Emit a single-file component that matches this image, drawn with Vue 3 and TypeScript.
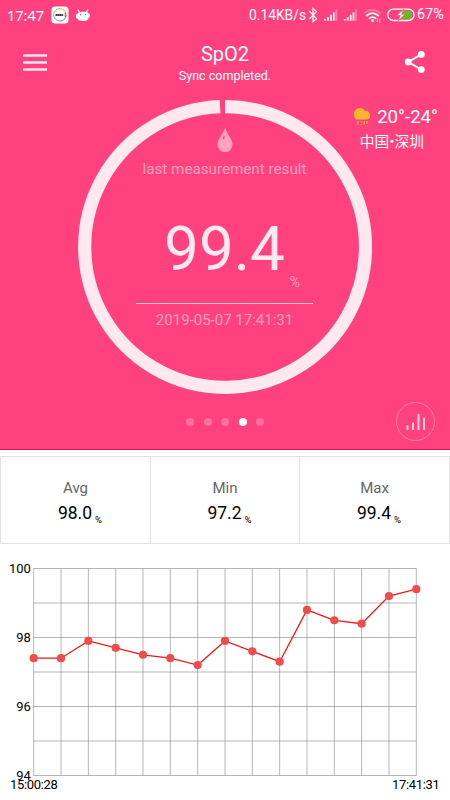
<script setup lang="ts">
interface Stat {
  label: string
  value: string
}

const stats: Stat[] = [
  { label: 'Avg', value: '98.0' },
  { label: 'Min', value: '97.2' },
  { label: 'Max', value: '99.4' },
]

const pages = 5
const activePage = 4

const left = 33.7
const right = 416.3
const top = 18.5
const unit = 34.5
const readings: number[] = [
  97.4, 97.4, 97.9, 97.7, 97.5, 97.4, 97.2, 97.9, 97.6, 97.3, 98.8, 98.5, 98.4, 99.2, 99.4,
]
const step = (right - left) / (readings.length - 1)
const points = readings.map((v, i) => ({ x: left + i * step, y: top + (100 - v) * unit }))
const polyline = points.map((p) => `${p.x.toFixed(1)},${p.y.toFixed(1)}`).join(' ')
const rows = [0, 1, 2, 3, 4, 5, 6].map((i) => top + i * unit)
const yLabels = [100, 98, 96, 94].map((v) => ({ text: v, y: top + (100 - v) * unit + 4.6 }))
</script>

<template>
  <main class="screen">
    <section class="hero">
      <div class="status">
        <span class="clock">17:47</span>
        <svg class="app-badge" width="18" height="18" viewBox="0 0 18 18">
          <rect x="0.5" y="0.5" width="17" height="17" rx="3.5" fill="#fff" />
          <g fill="none" stroke-width="1">
            <path d="M9 2.5A6.3 6.3 0 0 1 15.3 8.8" stroke="#efb04e" />
            <path d="M15.3 8.8A6.3 6.3 0 0 1 9 15.1" stroke="#9a62e0" />
            <path d="M9 15.1A6.3 6.3 0 0 1 2.7 8.8" stroke="#4aa5ee" />
            <path d="M2.7 8.8A6.3 6.3 0 0 1 9 2.5" stroke="#8fce62" />
          </g>
          <path d="M4.6 9h7.8" stroke="#333" stroke-width="2" stroke-dasharray="1.6 .3" />
          <path d="M14.2 6.2v5" stroke="#555" stroke-width="0.8" />
        </svg>
        <svg class="robot" width="16" height="13" viewBox="0 0 16 13">
          <path d="M3 1l2 3M12.8 1l-2 3" stroke="#fff" stroke-width="1.3" stroke-linecap="round" />
          <path
            d="M2.6 4.6C4 2.4 11.8 2.2 13.4 4.2C15.4 4.4 15.8 8 13.6 8.8C13 11.8 10.8 11.9 8.2 11.9C5.2 11.9 3 11.6 2.3 9.6C.2 9 .3 5.4 2.6 4.6Z"
            fill="#fff"
          />
          <circle cx="5.4" cy="5.8" r="0.7" fill="#ff427f" />
          <circle cx="10.5" cy="5.4" r="0.7" fill="#ff427f" />
        </svg>
        <div class="spacer"></div>
        <span class="speed">0.14KB/s</span>
        <svg class="sys" width="80" height="20" viewBox="306 5 80 20">
          <path d="M309.3 11l7.2 7.6-3.5 3V8.6l3.5 3-7.2 7.4" fill="none" stroke="#fff" stroke-width="1.2" />
          <g stroke-width="1.8">
            <path d="M325 20.8v-1.8M328 20.8v-3.6M331 20.8v-6M333.8 20.8v-8.6" stroke="#fff" opacity="0.95" />
            <path d="M336.3 20.8V9.3" stroke="#fff" opacity="0.3" />
            <path d="M344.7 20.8v-1.8M347.7 20.8v-3.6M350.7 20.8v-6M353.5 20.8v-8.6" stroke="#fff" opacity="0.95" />
            <path d="M356 20.8V9.3" stroke="#fff" opacity="0.3" />
          </g>
          <g fill="none" stroke="#fff" stroke-width="1.7">
            <path d="M364.3 13.2q8.3-6.6 16.4 0" opacity="0.3" />
            <path d="M366.2 16q6.2-5.6 12.6 0" />
            <path d="M369 18.6q3.6-2.8 7 0" />
          </g>
          <circle cx="372.6" cy="20.7" r="1.4" fill="#fff" />
          <path d="M377.4 18v4M379.8 18.8v4" stroke="#fff" stroke-width="1" opacity="0.8" />
        </svg>
        <svg class="battery" width="28" height="14" viewBox="0 0 28 14">
          <rect x="0.7" y="1.1" width="26.4" height="11.4" rx="5.7" fill="none" stroke="#fff" stroke-width="1.3" />
          <path d="M12 2.8h9a4.1 4.1 0 0 1 0 8.2h-9z" fill="#5cc31d" />
          <path
            d="M16.8 1.2L9.6 7.5h3.7l-2.2 5.3 7.2-6.6h-3.7z"
            fill="#fff"
            stroke="#ff427f"
            stroke-width="0.7"
          />
        </svg>
        <span class="percent">67%</span>
      </div>

      <header class="toolbar">
        <svg width="26" height="20" viewBox="0 0 26 20">
          <path d="M1 3.5h24M1 10.5h24M1 17.5h24" stroke="#fff" stroke-opacity="0.88" stroke-width="2.4" />
        </svg>
        <div class="heading">
          <h1>SpO2</h1>
          <p>Sync completed.</p>
        </div>
        <svg width="22" height="24" viewBox="0 0 22 24">
          <path d="M17.3 4.3L4.2 12l13.1 7.7" fill="none" stroke="#fff" stroke-width="2" />
          <circle cx="17.3" cy="4.4" r="3.4" fill="#fff" />
          <circle cx="4.2" cy="12" r="3.4" fill="#fff" />
          <circle cx="17.3" cy="19.6" r="3.4" fill="#fff" />
        </svg>
      </header>

      <div class="dial">
        <svg class="ring" width="294" height="294" viewBox="0 0 294 294">
          <path
            d="M147 6.6A140.4 140.4 0 1 1 142.1 6.69"
            fill="none"
            stroke="#ffe8ef"
            stroke-width="13.2"
          />
        </svg>
        <div class="reading">
          <svg width="16" height="26" viewBox="0 0 16 26">
            <path d="M8 0.5C6 7.4 .5 12 .5 17.6a7.5 7.5 0 0 0 15 0C15.5 12 10 7.4 8 .5Z" fill="#ffa3c0" />
            <ellipse cx="6.8" cy="10.6" rx="0.8" ry="1.8" fill="#ff427f" transform="rotate(15 6.8 10.6)" />
          </svg>
          <p class="caption">last measurement result</p>
          <p class="value">99.4</p>
          <p class="unit">%</p>
          <hr />
          <p class="stamp">2019-05-07 17:41:31</p>
        </div>
      </div>

      <aside class="weather">
        <div class="temp">
          <svg width="18" height="19" viewBox="0 0 18 19">
            <path
              d="M5 12.6C2 12.6 1 10.6 1 8.6C.2 4 3.2 1 6.6 1c2.4 0 4 1 5 2.8c3-.4 5.5 1.5 5.5 4.4c0 2.5-1.5 4.4-4 4.4z"
              fill="#f8b62d"
            />
            <path
              d="M5.2 14.2l-.8 3.6M8.4 14.2v1.6M8 17v1.2M11.4 14.2l-.5 3.6M14 14.2l-.3 2.4"
              stroke="#f8b62d"
              stroke-width="1.3"
            />
          </svg>
          <span>20°-24°</span>
        </div>
        <p class="city">中国•深圳</p>
      </aside>

      <nav class="pager">
        <i v-for="n in pages" :key="n" :class="{ active: n === activePage }"></i>
      </nav>

      <button class="history" type="button">
        <svg width="20" height="18" viewBox="0 0 20 18">
          <path
            d="M1.5 16.2v-3M7 16.2v-6M12.5 16.2V1.8M18 16.2V5.6"
            stroke="#ffd3e1"
            stroke-width="2"
            stroke-linecap="round"
          />
        </svg>
      </button>
    </section>

    <section class="stats">
      <div v-for="s in stats" :key="s.label" class="stat">
        <span class="label">{{ s.label }}</span>
        <span class="number">{{ s.value }}<small>%</small></span>
      </div>
    </section>

    <svg class="chart" width="450" height="250" viewBox="0 0 450 250">
      <g stroke="#777" stroke-opacity="0.6" stroke-width="0.9">
        <line v-for="y in rows" :key="y" :x1="left" :x2="right" :y1="y" :y2="y" />
        <line v-for="p in points" :key="p.x" :x1="p.x" :x2="p.x" :y1="rows[0]" :y2="rows[6]" />
      </g>
      <polyline :points="polyline" fill="none" stroke="#f01818" stroke-width="1.3" />
      <circle v-for="p in points" :key="p.x" :cx="p.x" :cy="p.y" r="4.1" fill="#f04c4c" />
      <g class="axis">
        <text v-for="l in yLabels" :key="l.text" x="30.8" :y="l.y" text-anchor="end">{{ l.text }}</text>
        <text x="33.9" y="239.4" text-anchor="middle" textLength="47.6">15:00:28</text>
        <text x="415.9" y="239.4" text-anchor="middle" textLength="47.6">17:41:31</text>
      </g>
    </svg>
  </main>
</template>

<style>
body {
  margin: 0;
  background: #fff;
}
</style>

<style scoped>
.screen {
  width: 450px;
  height: 800px;
  overflow: hidden;
  background: #fff;
  font-family: Roboto, 'Noto Sans CJK SC', sans-serif;
}
p,
h1 {
  margin: 0;
  font-weight: 400;
}
.hero {
  position: relative;
  box-sizing: border-box;
  height: 450px;
  background: #ff427f;
  border-bottom: 1px solid #e8095c;
  color: #fff;
}
.status {
  display: flex;
  align-items: center;
  height: 30px;
  padding: 0 4px 0 7px;
  white-space: nowrap;
}
.clock {
  width: 44px;
  font: 14.5px/30px 'Noto Sans', sans-serif;
}
.robot {
  margin-left: 6px;
}
.spacer {
  flex: 1;
}
.speed {
  font-size: 13.8px;
  line-height: 31px;
}
.battery {
  margin-left: 1px;
}
.percent {
  margin-left: 2px;
  width: 29px;
  font-size: 14.4px;
  line-height: 30px;
}
.toolbar {
  display: flex;
  align-items: center;
  height: 64px;
  padding: 0 24px 0 22px;
}
.heading {
  flex: 1;
  padding: 3px 2px 0 0;
  text-align: center;
}
.heading h1 {
  font-size: 20px;
  line-height: 25px;
}
.heading p {
  font-size: 12.5px;
  line-height: 18px;
}
.dial {
  display: grid;
  width: 294px;
  margin: 6px auto 0;
}
.ring,
.reading {
  grid-area: 1 / 1;
}
.reading {
  display: flex;
  flex-direction: column;
  align-items: center;
  padding: 27px 1px 0 0;
}
.caption {
  margin-top: 6px;
  font-size: 15.2px;
  line-height: 20px;
  color: #ffa0bf;
}
.value {
  margin-top: 35px;
  font-size: 62px;
  line-height: 70px;
  color: #ffe8ef;
}
.unit {
  align-self: flex-end;
  margin: -11px 71px 0 0;
  font-size: 14px;
  line-height: 18px;
  color: #ffa0bf;
}
.reading hr {
  width: 177px;
  height: 1px;
  margin: 12px 0 0;
  border: 0;
  background: #ffc3d6;
}
.stamp {
  margin-top: 6px;
  font-size: 15px;
  line-height: 20px;
  color: #ffa0bf;
}
.weather {
  position: absolute;
  top: 106px;
  right: 12px;
}
.temp {
  display: flex;
  align-items: center;
  gap: 6px;
  font-size: 18.6px;
  line-height: 22px;
}
.temp svg {
  margin-top: -2px;
}
.city {
  margin: 4px 14px 0 0;
  font-size: 14.8px;
  line-height: 20px;
  text-align: right;
}
.pager {
  display: flex;
  justify-content: center;
  gap: 9.5px;
  margin-top: 24px;
}
.pager i {
  width: 8px;
  height: 8px;
  border-radius: 50%;
  background: #ff729f;
}
.pager i.active {
  background: #fff;
}
.history {
  position: absolute;
  right: 15px;
  bottom: 8px;
  display: flex;
  align-items: center;
  justify-content: center;
  box-sizing: border-box;
  width: 39px;
  height: 39px;
  padding: 0;
  border: 1px solid #ff82aa;
  border-radius: 50%;
  background: none;
}
.stats {
  display: grid;
  grid-template-columns: 151px 149px 150px;
  box-sizing: border-box;
  height: 88px;
  margin-top: 6px;
  border: solid #e3e3e3;
  border-width: 1px 0;
}
.stat {
  display: flex;
  flex-direction: column;
  align-items: center;
  padding-top: 20px;
  border-right: 1px solid #e3e3e3;
}
.stat:first-child {
  border-left: 1px solid #e3e3e3;
}
.label {
  font-size: 15px;
  line-height: 22px;
  color: #666;
}
.number {
  padding-left: 9px;
  font-size: 17.5px;
  line-height: 28px;
  color: #000;
}
.number small {
  position: relative;
  top: 4px;
  margin-left: 3px;
  font-size: 9.5px;
}
.chart {
  display: block;
  margin-top: 6px;
}
.axis {
  font-size: 13px;
  fill: #000;
}
</style>
